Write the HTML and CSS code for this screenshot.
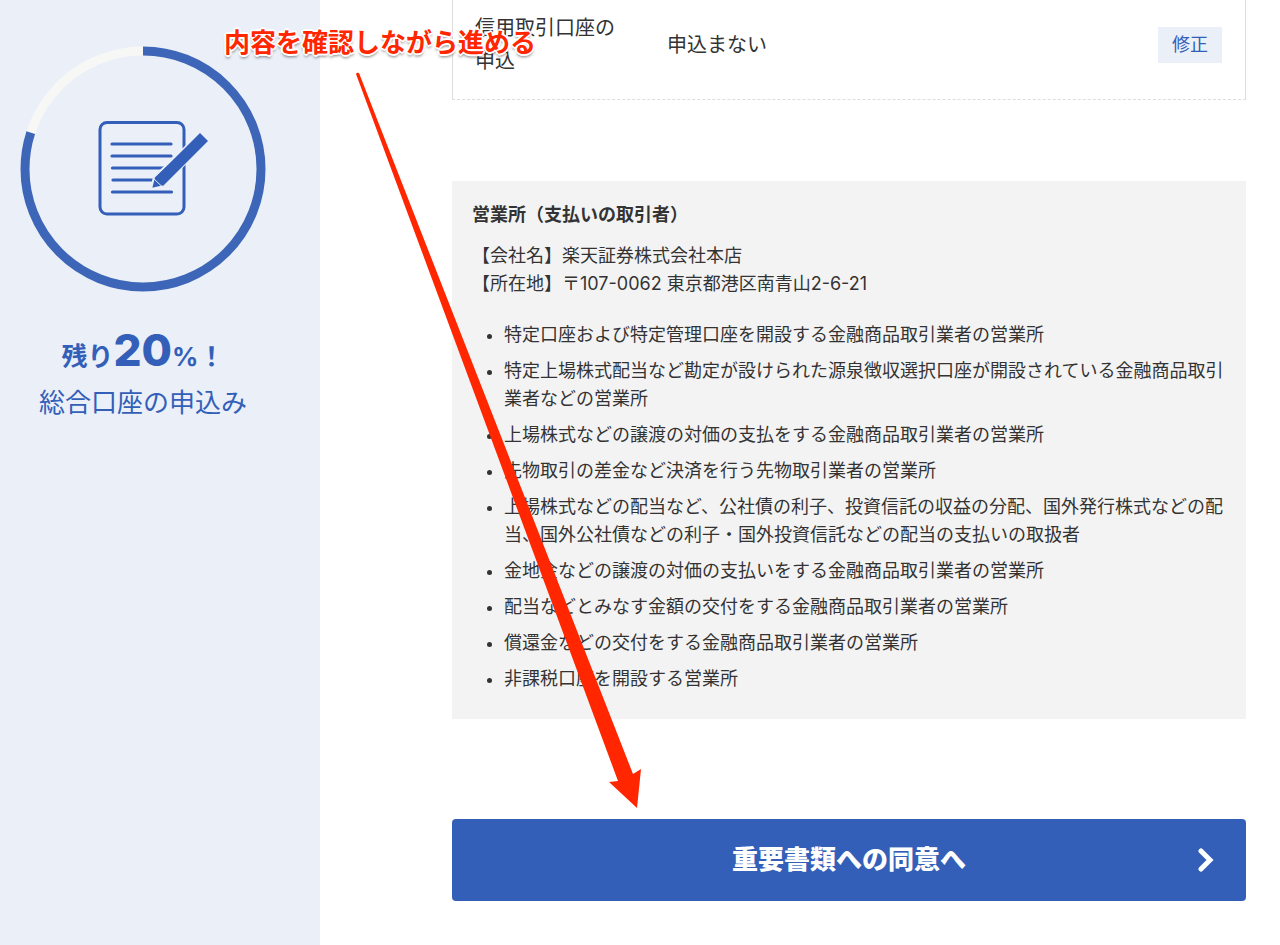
FILE: index.html
```
<!DOCTYPE html>
<html lang="ja">
<head>
    <meta charset="UTF-8">
    <meta name="viewport" content="width=device-width, initial-scale=1.0">
    <title>総合口座の申込み</title>
    <link rel="stylesheet" href="styles.css">
</head>
<body>
    <div class="page">
        <aside class="sidebar">
            <svg class="progress" viewBox="0 0 246 246" aria-hidden="true">
                <circle cx="123" cy="123" r="118" fill="none" stroke="#f7f7f5" stroke-width="9"/>
                <circle cx="123" cy="123" r="118" fill="none" stroke="#3d65b8" stroke-width="9" pathLength="100" stroke-dasharray="80 20" transform="rotate(-90 123 123)"/>
                <!-- 用紙 -->
                <g fill="none" stroke="#335fb9" stroke-width="3.2" stroke-linecap="round">
                    <rect x="80" y="76.5" width="84" height="91.5" rx="7" stroke-width="3"/>
                    <path d="M92 98h59M92 110h59M92.5 122h58M93 134h50M92.5 146h59"/>
                </g>
                <!-- ペン -->
                <path d="M180 87l8 8L142.500 140.500 131 143l3-12z" fill="#335fb9" stroke="#eaeff8" stroke-width="2"/>
                <path d="M180 87l8 8L143 140l-8-8z" fill="#335fb9"/>
                <path d="M133 132l9.500 9" stroke="#eaeff8" stroke-width="1"/>
            </svg>
            <p class="remain">残り<strong class="remain-num">20</strong>%！</p>
            <p class="step-name">総合口座の申込み</p>
        </aside>

        <main class="main">
            <dl class="confirm">
                <dt class="confirm-label">信用取引口座の申込</dt>
                <dd class="confirm-value">申込まない</dd>
                <dd class="confirm-action"><button type="button" class="edit">修正</button></dd>
            </dl>

            <section class="office">
                <h2 class="office-title">営業所（支払いの取引者）</h2>
                <p class="office-address">【会社名】楽天証券株式会社本店<br>【所在地】〒107-0062 東京都港区南青山2-6-21</p>
                <ul class="office-list">
                    <li>特定口座および特定管理口座を開設する金融商品取引業者の営業所</li>
                    <li>特定上場株式配当など勘定が設けられた源泉徴収選択口座が開設されている金融商品取引業者などの営業所</li>
                    <li>上場株式などの譲渡の対価の支払をする金融商品取引業者の営業所</li>
                    <li>先物取引の差金など決済を行う先物取引業者の営業所</li>
                    <li>上場株式などの配当など、公社債の利子、投資信託の収益の分配、国外発行株式などの配当、国外公社債などの利子・国外投資信託などの配当の支払いの取扱者</li>
                    <li>金地金などの譲渡の対価の支払いをする金融商品取引業者の営業所</li>
                    <li>配当などとみなす金額の交付をする金融商品取引業者の営業所</li>
                    <li>償還金などの交付をする金融商品取引業者の営業所</li>
                    <li>非課税口座を開設する営業所</li>
                </ul>
            </section>

            <button type="button" class="next">
                <span class="next-text">重要書類への同意へ</span>
                <svg class="next-arrow" viewBox="0 0 16 24" aria-hidden="true">
                    <path d="M3 3l9 9-9 9" fill="none" stroke="#fff" stroke-width="5" stroke-linecap="round"/>
                </svg>
            </button>
        </main>

        <!-- 説明用の注釈 -->
        <p class="note">内容を確認しながら進める</p>
        <svg class="note-arrow" viewBox="0 0 286 737" aria-hidden="true">
            <path d="M1 2Q2 0 4 1L278 702l8-5-4 39-28-26 9-1z" fill="#ff2600"/>
        </svg>
    </div>
</body>
</html>
```
FILE: styles.css
```
* { box-sizing: border-box; }

body {
    margin: 0;
    color: #333;
    background-color: #fff;
    font-family: Inter, "Noto Sans CJK JP", sans-serif;
    font-size: 18px;
    line-height: 28px;
}

p, h2, ul, dl, dd { margin: 0; }

button { font-family: inherit; border: none; cursor: pointer; }

.page { position: relative; display: flex; min-height: 100vh; }

/* 左側の進捗 */
.sidebar {
    width: 25%;
    flex-shrink: 0;
    padding: 46px 34px 0 0;
    display: flex;
    flex-direction: column;
    align-items: center;
    background-color: #eaeff8;
    color: #335fb9;
    font-size: 26px;
    white-space: nowrap;
}
.progress { width: 246px; height: 246px; }
.remain { margin-top: 32px; font-weight: bold; line-height: 52px; }
.remain-num { font-size: 44px; font-weight: 800; }
.step-name { line-height: 40px; }

.main { flex: 1; min-width: 0; padding: 0 34px 44px 132px; }

.confirm {
    display: flex;
    align-items: center;
    padding: 12px 23px 21px 22px;
    border: 1px solid #ddd;
    border-top: none;
    border-bottom-style: dashed;
    font-size: 20px;
    line-height: 33px;
}
.confirm-label { width: 148px; margin-right: 44px; }
.confirm-value { flex: 1; }
.edit { padding: 4px 14px; font-size: 18px; line-height: 28px; color: #335fb9; background-color: #eaeff8; }

.office { margin-top: 81px; padding: 20px 20px 18px; background-color: #f3f3f3; }
.office-title { font-size: 18px; line-height: 28px; }
.office-address { margin-top: 13px; }
.office-list { margin-top: 23px; padding-left: 32px; }
.office-list li { margin-bottom: 8px; }
.office-list li::marker { font-size: 16px; }

.next {
    display: flex;
    align-items: center;
    width: 100%;
    margin-top: 100px;
    padding: 20px 32px;
    border-radius: 4px;
    background-color: #335fb9;
    color: #fff;
    font-size: 26px;
    font-weight: 900;
    line-height: 42px;
}
.next-text { flex: 1; padding-left: 16px; }
.next-arrow { width: 16px; height: 24px; }

/* 注釈 */
.note {
    position: absolute;
    top: 24px;
    left: 224px;
    color: #ff2600;
    font-size: 26px;
    font-weight: bold;
    line-height: 38px;
    white-space: nowrap;
    text-shadow:
        2px 0 0 #fff, -2px 0 0 #fff, 0 2px 0 #fff, 0 -2px 0 #fff,
        1px 1px 0 #fff, -1px 1px 0 #fff, 1px -1px 0 #fff, -1px -1px 0 #fff,
        0 3px 3px rgba(0, 0, 0, 0.5);
}
.note-arrow { position: absolute; top: 72px; left: 355px; width: 286px; height: 737px; pointer-events: none; }
```
